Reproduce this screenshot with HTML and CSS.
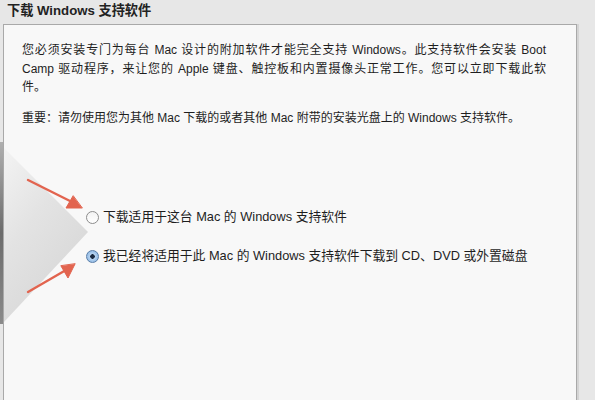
FILE: index.html
```html
<!DOCTYPE html>
<html lang="zh-CN">
<head>
    <meta charset="UTF-8">
    <title>下载 Windows 支持软件</title>
    <link rel="stylesheet" href="styles.css">
</head>
<body>
    <div class="page">
        <h1 class="title">下载 Windows 支持软件</h1>
        <div class="panel">
            <p class="info">
                <span class="full">您必须安装专门为每台 Mac 设计的附加软件才能完全支持 Windows。此支持软件会安装 Boot</span>
                <span class="full">Camp 驱动程序，来让您的 Apple 键盘、触控板和内置摄像头正常工作。您可以立即下载此软</span>
                件。
            </p>
            <p class="info">重要：请勿使用您为其他 Mac 下载的或者其他 Mac 附带的安装光盘上的 Windows 支持软件。</p>
            <ul class="choices">
                <li class="choice"><span class="radio"></span>下载适用于这台 Mac 的 Windows 支持软件</li>
                <li class="choice"><span class="radio on"></span>我已经将适用于此 Mac 的 Windows 支持软件下载到 CD、DVD 或外置磁盘</li>
            </ul>
        </div>
        <svg class="marks" width="100" height="340" viewBox="0 0 100 340">
            <defs>
                <linearGradient id="fold" x1="0" y1="0" x2="0.6" y2="1">
                    <stop offset="0" stop-color="#f3f3f3"/>
                    <stop offset="0.45" stop-color="#e3e3e3"/>
                    <stop offset="1" stop-color="#d6d6d6"/>
                </linearGradient>
                <linearGradient id="edge" x1="0" y1="0" x2="0" y2="1">
                    <stop offset="0" stop-color="#b0b0b0"/>
                    <stop offset="0.5" stop-color="#6c6c6c"/>
                    <stop offset="1" stop-color="#8a8a8a"/>
                </linearGradient>
            </defs>
            <polygon points="4,148 88,232 4,322" fill="url(#fold)"/>
            <rect x="0" y="142" width="3" height="182" fill="url(#edge)"/>
            <g stroke="#e2644f" stroke-width="2.4" stroke-linecap="round" fill="#e2644f">
                <line x1="28" y1="180" x2="72" y2="202"/>
                <polygon points="82,208 66,208 73,196" stroke-width="1"/>
                <line x1="28" y1="292" x2="66" y2="270"/>
                <polygon points="75,264 68,278 61,266" stroke-width="1"/>
            </g>
        </svg>
    </div>
</body>
</html>
```

FILE: styles.css
```css
* {
    margin: 0;
    padding: 0;
    list-style: none;
}
body{
    background: #e7e7e7;
    font-family: "Liberation Sans", "Noto Sans CJK SC", sans-serif;
    color: #1e1e1e;
    overflow: hidden;
}
.page{
    position: relative;
    height: 400px;
}
.title{
    font-size: 13.2px;
    font-weight: bold;
    line-height: 20px;
    padding: 1px 0 0 7px;
    height: 23px;
    color: #222;
}
.panel{
    margin-left: 3px;
    width: 574px;
    height: 376px;
    background: #f8f8f8;
    border: 1px solid #a9a9a9;
    border-bottom: 0;
    box-shadow: 2px 0 0 #d4d4d4;
    padding: 16px 30px 0 18px;
    box-sizing: border-box;
}
.info{
    font-size: 12px;
    line-height: 18.5px;
    margin-bottom: 12.5px;
}
.full{
    display: block;
    text-align: justify;
    text-align-last: justify;
}
.choices{
    margin-top: 70px;
    padding-left: 64px;
}
.choice{
    display: flex;
    align-items: center;
    font-size: 12.8px;
    line-height: 18px;
    height: 39px;
}
.radio{
    width: 13px;
    height: 13px;
    border-radius: 50%;
    border: 1px solid #8c8c8c;
    background: linear-gradient(#f2f2f2, #ffffff);
    box-sizing: border-box;
    margin-right: 4px;
}
.radio.on{
    border-color: #5a7ea8;
    background: radial-gradient(circle, #1a2a40 0, #1a2a40 2px, #b8d4f0 2.5px, #7eaee0 100%);
}
.marks{
    position: absolute;
    left: 0;
    top: 0;
}
```
